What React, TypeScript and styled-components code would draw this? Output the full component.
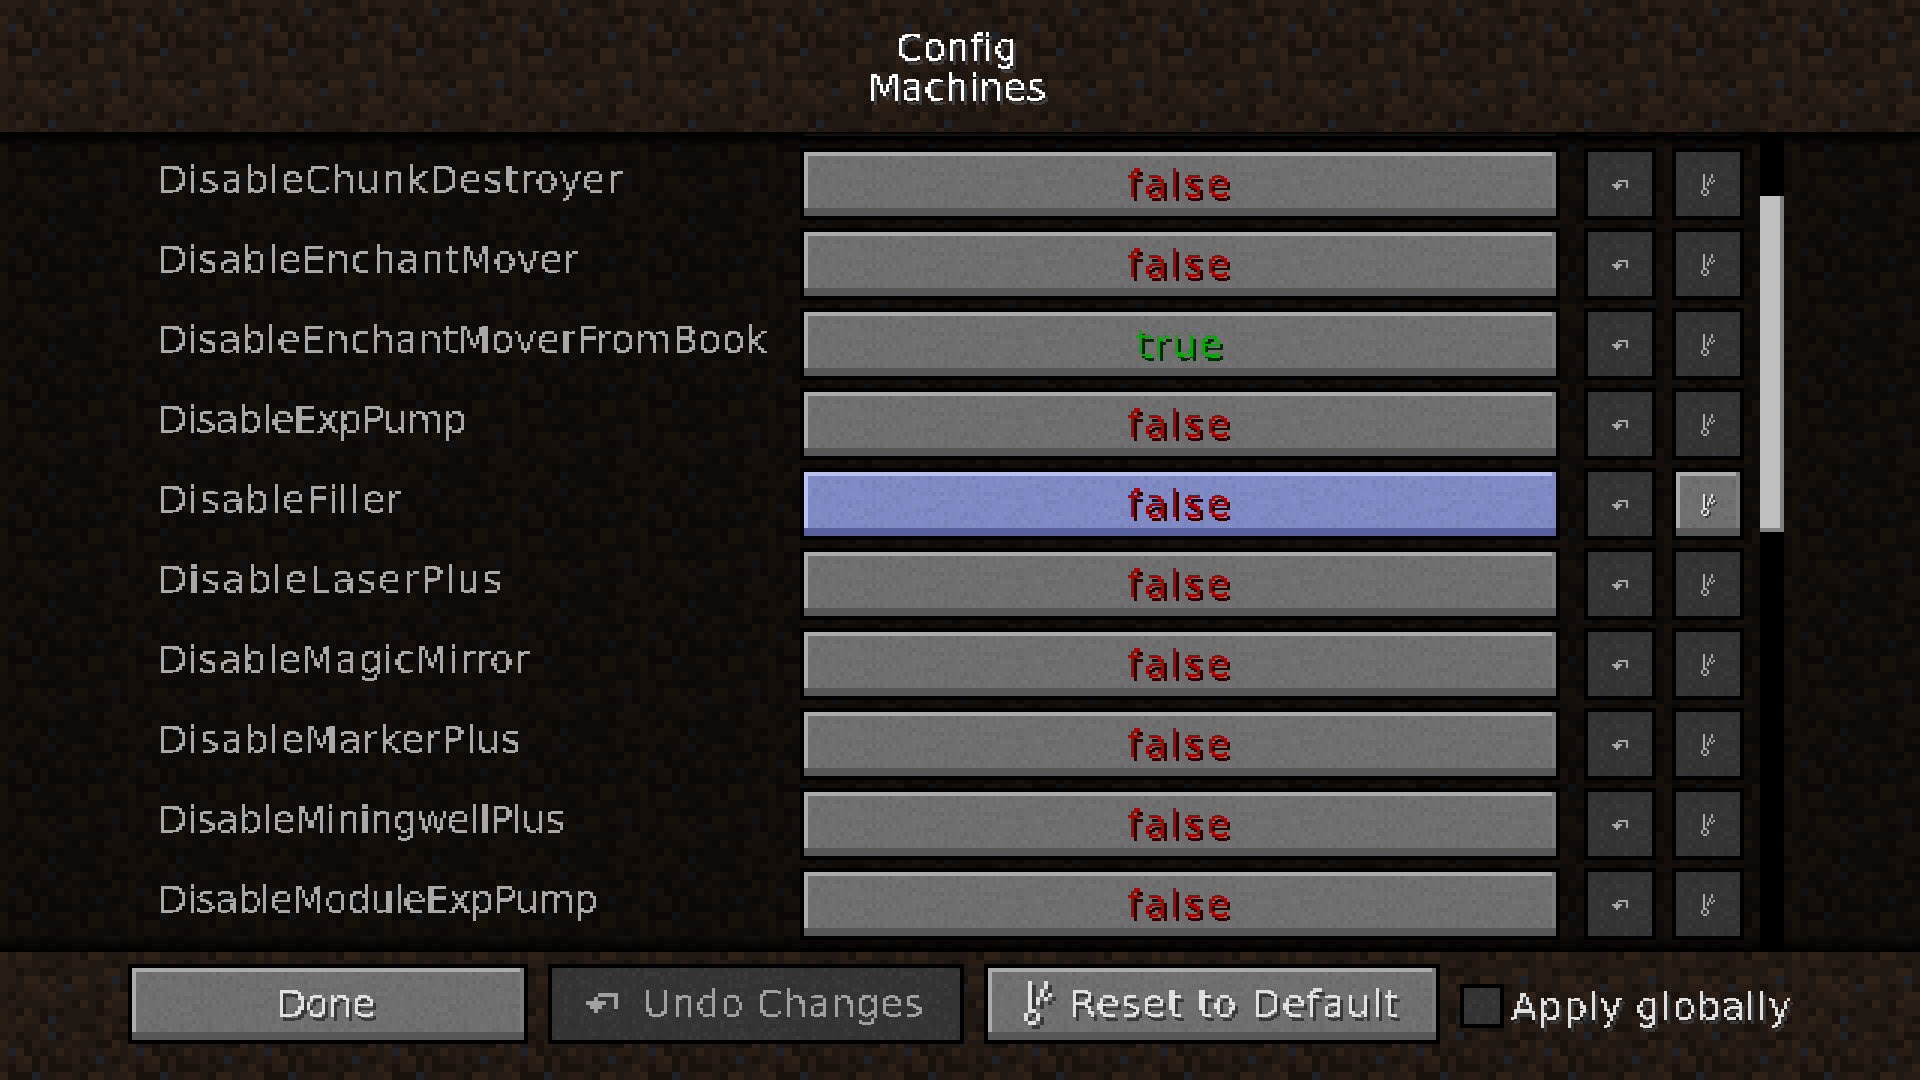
import React, { useLayoutEffect, useRef } from "react";
import styled, { createGlobalStyle } from "styled-components";

const DIRT = [
  "2221131211001312",
  "120112B013211200",
  "3110211121110031",
  "2B30101312121221",
  "212302011201B101",
  "1022020001101113",
  "3000B11221033122",
  "3133111112033111",
  "2122121012211101",
  "2201100111111331",
  "22133131033122B1",
  "21122312B2210120",
  "1021223111111133",
  "1211112210310322",
  "2103101011110122",
  "213220B111112210",
];
const dirtColors: Record<string, string> = { "0": "#18110c", "1": "#1f1711", "2": "#261c14", "3": "#2d2118", B: "#1e2329" };
const dirtColorsDim: Record<string, string> = { "0": "#0b0806", "1": "#0f0b08", "2": "#130e0a", "3": "#17110c", B: "#0f1115" };

const dirtTile = (palette: Record<string, string>) => {
  let rects = "";
  DIRT.forEach((row, y) => {
    row.split("").forEach((c, x) => {
      rects += `<rect x='${x}' y='${y}' width='1' height='1' fill='${palette[c]}'/>`;
    });
  });
  const svg = `<svg xmlns='http://www.w3.org/2000/svg' width='128' height='128' viewBox='0 0 16 16' shape-rendering='crispEdges'>${rects}</svg>`;
  return `url("data:image/svg+xml,${encodeURIComponent(svg)}")`;
};

const noiseTile = () => {
  let seed = 1337;
  const rnd = () => {
    seed = (seed * 16807) % 2147483647;
    return seed / 2147483647;
  };
  let rects = "";
  for (let y = 0; y < 18; y++) {
    for (let x = 0; x < 64; x++) {
      const v = rnd();
      if (v < 0.22) rects += `<rect x='${x}' y='${y}' width='1' height='1' fill='#000' opacity='${(0.02 + rnd() * 0.035).toFixed(3)}'/>`;
      else if (v > 0.78) rects += `<rect x='${x}' y='${y}' width='1' height='1' fill='#fff' opacity='${(0.012 + rnd() * 0.025).toFixed(3)}'/>`;
    }
  }
  const svg = `<svg xmlns='http://www.w3.org/2000/svg' width='256' height='72' viewBox='0 0 64 18' shape-rendering='crispEdges'>${rects}</svg>`;
  return `url("data:image/svg+xml,${encodeURIComponent(svg)}")`;
};

const DIRT_BRIGHT = dirtTile(dirtColors);
const DIRT_DIM = dirtTile(dirtColorsDim);
const NOISE = noiseTile();

const GlobalStyle = createGlobalStyle`
  html, body { margin: 0; padding: 0; background: #000; }
  body { width: 1920px; height: 1080px; overflow: hidden; font-family: "DejaVu Sans", sans-serif; }
`;

const Screen = styled.div`
  width: 1920px;
  height: 1080px;
  display: flex;
  flex-direction: column;
  overflow: hidden;
`;

const Header = styled.header`
  height: 132px;
  padding: 28px 6px 0 0;
  gap: 2px;
  box-sizing: border-box;
  display: flex;
  flex-direction: column;
  align-items: center;
  background: ${DIRT_BRIGHT} 0 0 / 128px 128px fixed;
`;

const ListPanel = styled.main`
  position: relative;
  height: 820px;
  display: flex;
  overflow: hidden;
  padding-left: 158px;
  box-sizing: border-box;
  background: ${DIRT_DIM} 0 96px / 128px 128px fixed;
  &::before,
  &::after {
    content: "";
    position: absolute;
    left: 0;
    right: 0;
    height: 16px;
    z-index: 3;
  }
  &::before { top: 0; background: linear-gradient(#000, rgba(0, 0, 0, 0)); }
  &::after { bottom: 0; background: linear-gradient(rgba(0, 0, 0, 0), #000); }
`;

const Rows = styled.div`
  width: 1602px;
  flex: none;
  margin-top: -64px;
  display: flex;
  flex-direction: column;
  gap: 8px;
`;

const Row = styled.div`
  height: 72px;
  flex: none;
  display: flex;
  align-items: center;
`;

const Label = styled.div`
  width: 642px;
  flex: none;
  padding-bottom: 11px;
  box-sizing: border-box;
`;

const McButton = styled.div<{ $w?: number; $h?: number; $tone?: "normal" | "hover" | "disabled"; $gap?: number; $shift?: number }>`
  width: ${(p) => (p.$w ? `${p.$w}px` : "auto")};
  height: ${(p) => p.$h ?? 72}px;
  flex: none;
  box-sizing: border-box;
  border: 4px solid #000;
  display: flex;
  align-items: center;
  justify-content: center;
  background-color: ${(p) => (p.$tone === "hover" ? "#7f8ac4" : p.$tone === "disabled" ? "#343434" : "#6f6f6f")};
  background-image: ${NOISE};
  box-shadow: ${(p) =>
    p.$tone === "disabled"
      ? "none"
      : p.$tone === "hover"
        ? "inset 0 -8px 0 #575f9c, inset -4px 0 0 #7f8ac4, inset 4px 4px 0 #b9c1ee"
        : "inset 0 -8px 0 #575757, inset -4px 0 0 #7b7b7b, inset 4px 4px 0 #acacac"};
`;

const ValueButton = styled(McButton)`
  margin-right: 24px;
  padding-bottom: 2px;
`;

const IconButton = styled(McButton)`
  margin-right: 16px;
  padding-top: 2px;
`;

const FooterButton = styled(McButton)`
  gap: ${(p) => p.$gap ?? 0}px;
  padding: 0 ${(p) => p.$shift ?? 0}px 2px 0;
`;

const Scrollbar = styled.div`
  width: 24px;
  flex: none;
  background: #000;
`;

const Thumb = styled.div`
  height: 336px;
  margin-top: 64px;
  box-sizing: border-box;
  background: #c0c0c0;
  box-shadow: inset -4px -4px 0 #808080;
`;

const Footer = styled.footer`
  height: 128px;
  box-sizing: border-box;
  padding: 12px 0 0 128px;
  display: flex;
  gap: 20px;
  align-items: flex-start;
  background: ${DIRT_BRIGHT} 0 0 / 128px 128px fixed;
`;

const CheckGroup = styled.div`
  display: flex;
  align-items: flex-start;
  gap: 7px;
  margin-top: 20px;
`;

const CheckBox = styled.div`
  width: 44px;
  height: 44px;
  box-sizing: border-box;
  border: 4px solid #000;
  background: #343434 ${NOISE};
`;

const CheckLabel = styled.div`
  padding-top: 3px;
`;

const Pixel = styled.span<{ $color: string; $shadow?: string }>`
  display: inline-block;
  font-family: "DejaVu Sans", sans-serif;
  font-size: 38px;
  line-height: 38px;
  padding: 6px 0 8px;
  margin: -6px 0 -8px;
  white-space: nowrap;
  color: ${(p) => p.$color};
  filter: url(#mc-pixel) ${(p) => (p.$shadow ? `drop-shadow(3px 4px 0 ${p.$shadow})` : "")};
`;

const IconSvg = styled.svg<{ $shadow?: string; $s: number }>`
  display: block;
  flex: none;
  ${(p) => (p.$shadow ? `filter: drop-shadow(${p.$s}px ${p.$s}px 0 ${p.$shadow});` : "")}
`;

const HiddenDefs = styled.svg`
  position: absolute;
  width: 0;
  height: 0;
`;

const Fit = ({ text, w, color, shadow }: { text: string; w: number; color: string; shadow?: string }) => {
  const ref = useRef<HTMLSpanElement>(null);
  useLayoutEffect(() => {
    const el = ref.current;
    if (!el) return;
    el.style.letterSpacing = "0px";
    const natural = el.getBoundingClientRect().width;
    el.style.letterSpacing = `${(w - natural) / Math.max(1, text.length - 1)}px`;
  }, [text, w]);
  return (
    <Pixel ref={ref} $color={color} $shadow={shadow}>
      {text}
    </Pixel>
  );
};

const UNDO = ["...#####", "..#....#", "#####..#", ".###...#", "..#....."];
const RESET = [
  ".#...#.",
  ".#...#.",
  ".#..#..",
  ".#..#.#",
  ".#.#.#.",
  ".#.#...",
  ".#.....",
  ".##....",
  "#..#...",
  "#..#...",
  ".##....",
];

const PixelIcon = ({ map, s, color, shadow }: { map: string[]; s: number; color: string; shadow?: string }) => (
  <IconSvg
    $s={s}
    $shadow={shadow}
    width={map[0].length * s}
    height={map.length * s}
    viewBox={`0 0 ${map[0].length} ${map.length}`}
    shapeRendering="crispEdges"
  >
    {map.map((row, y) =>
      row.split("").map((c, x) => (c === "#" ? <rect key={`${x}-${y}`} x={x} y={y} width={1} height={1} fill={color} /> : null))
    )}
  </IconSvg>
);

type Item = { name: string; w: number; value: boolean; hover?: boolean };
const ITEMS: Item[] = [
  { name: "", w: 0, value: false },
  { name: "DisableChunkDestroyer", w: 464, value: false },
  { name: "DisableEnchantMover", w: 421, value: false },
  { name: "DisableEnchantMoverFromBook", w: 609, value: true },
  { name: "DisableExpPump", w: 309, value: false },
  { name: "DisableFiller", w: 244, value: false, hover: true },
  { name: "DisableLaserPlus", w: 344, value: false },
  { name: "DisableMagicMirror", w: 371, value: false },
  { name: "DisableMarkerPlus", w: 363, value: false },
  { name: "DisableMiningwellPlus", w: 407, value: false },
  { name: "DisableModuleExpPump", w: 440, value: false },
  { name: "", w: 0, value: false },
];

const RED = { c: "#aa0000", s: "#2a0000" };
const GREEN = { c: "#00aa00", s: "#002a00" };

export default function App() {
  return (
    <Screen>
      <GlobalStyle />
      <HiddenDefs aria-hidden="true">
        <filter id="mc-pixel" x="0" y="0" width="100%" height="100%" colorInterpolationFilters="sRGB">
          <feFlood x="1" y="0" width="1" height="3" floodColor="#000" />
          <feComposite width="3" height="4" />
          <feTile result="grid" />
          <feComposite in="SourceGraphic" in2="grid" operator="in" />
          <feComponentTransfer>
            <feFuncA type="discrete" tableValues="0 0 1" />
          </feComponentTransfer>
          <feMorphology operator="dilate" radius="1 0" result="cells" />
          <feOffset in="cells" dy="1" result="cellsLow" />
          <feMerge>
            <feMergeNode in="cells" />
            <feMergeNode in="cellsLow" />
          </feMerge>
        </filter>
      </HiddenDefs>
      <Header>
        <Fit text="Config" w={122} color="#ffffff" shadow="#3f3f3f" />
        <Fit text="Machines" w={178} color="#ffffff" shadow="#3f3f3f" />
      </Header>
      <ListPanel>
        <Rows>
          {ITEMS.map((it, i) => {
            const v = it.value ? GREEN : RED;
            return (
              <Row key={i}>
                <Label>{it.name && <Fit text={it.name} w={it.w} color="#a8a8a8" />}</Label>
                <ValueButton $w={760} $tone={it.hover ? "hover" : "normal"}>
                  {it.name && <Fit text={it.value ? "true" : "false"} w={it.value ? 86 : 102} color={v.c} shadow={v.s} />}
                </ValueButton>
                <IconButton $w={72} $tone="disabled">
                  <PixelIcon map={UNDO} s={2} color="#a8a8a8" />
                </IconButton>
                <IconButton $w={72} $tone={it.hover ? "normal" : "disabled"}>
                  <PixelIcon map={RESET} s={2} color={it.hover ? "#e0e0e0" : "#a8a8a8"} shadow={it.hover ? "#383838" : undefined} />
                </IconButton>
              </Row>
            );
          })}
        </Rows>
        <Scrollbar>
          <Thumb />
        </Scrollbar>
      </ListPanel>
      <Footer>
        <FooterButton $w={400} $h={80} $shift={5}>
          <Fit text="Done" w={98} color="#e0e0e0" shadow="#383838" />
        </FooterButton>
        <FooterButton $w={416} $h={80} $tone="disabled" $gap={25} $shift={2}>
          <PixelIcon map={UNDO} s={4} color="#a0a0a0" />
          <Fit text="Undo Changes" w={280} color="#a0a0a0" />
        </FooterButton>
        <FooterButton $w={456} $h={80} $gap={18}>
          <PixelIcon map={RESET} s={4} color="#e0e0e0" shadow="#383838" />
          <Fit text="Reset to Default" w={329} color="#e0e0e0" shadow="#383838" />
        </FooterButton>
        <CheckGroup>
          <CheckBox />
          <CheckLabel>
            <Fit text="Apply globally" w={280} color="#e0e0e0" shadow="#383838" />
          </CheckLabel>
        </CheckGroup>
      </Footer>
    </Screen>
  );
}
